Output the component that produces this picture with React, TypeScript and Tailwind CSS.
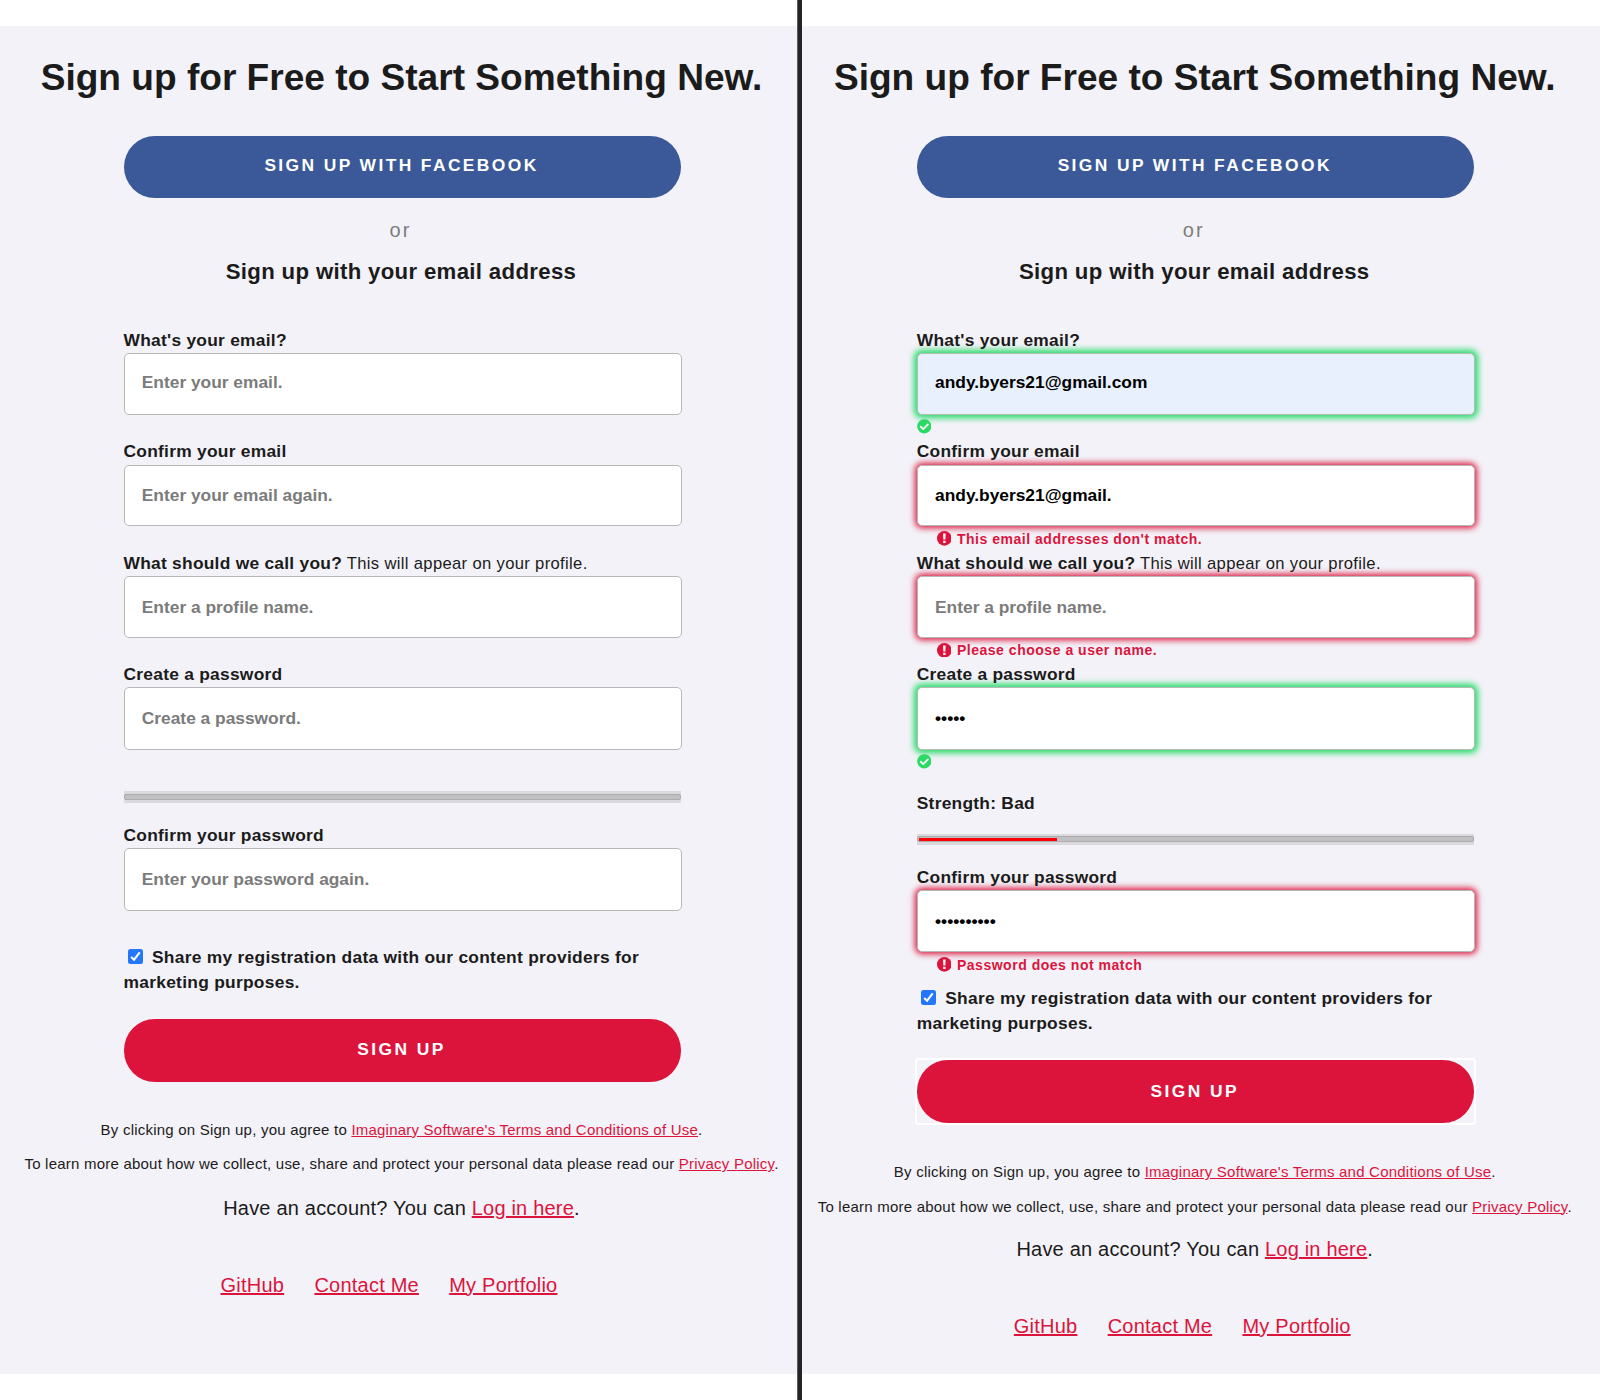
import type { ReactNode } from "react";
import { FaCheckCircle } from "react-icons/fa";

type Status = "idle" | "valid" | "invalid";

const shadows: Record<Status, string> = {
  idle: "",
  valid: "shadow-[0_0_6px_2.5px_#22dc66]",
  invalid: "shadow-[0_0_6px_2px_#dc143c]",
};

function AlertIcon() {
  return (
    <svg viewBox="0 0 16 16" className="size-[14.7px]">
      <circle cx="8" cy="8" r="8" fill="#dc143c" />
      <path d="M6.6 2.6h2.8l-.3 6.6H6.9zM6.7 10.6h2.6v2.5H6.7z" fill="#fff" />
    </svg>
  );
}

function Field({
  label,
  hint,
  placeholder,
  value = "",
  type = "text",
  status = "idle",
  message,
  autofilled = false,
  inputClass = "h-[61.7px] pt-[1px]",
}: {
  label: string;
  hint?: string;
  placeholder: string;
  value?: string;
  type?: string;
  status?: Status;
  message?: string;
  autofilled?: boolean;
  inputClass?: string;
}) {
  return (
    <div className="h-[111.35px]">
      <label className="block h-[25.2px] text-[17.4px] leading-[25px] font-bold tracking-[0.25px] whitespace-nowrap">
        {label}
        {hint && <span className="text-[16.6px] font-normal tracking-[0.34px]"> {hint}</span>}
      </label>
      <input
        type={type}
        placeholder={placeholder}
        defaultValue={value}
        className={`block w-[558px] rounded-[5px] border border-[#b8b8b8] px-[17.3px] text-[17.35px] font-bold text-black outline-none placeholder:text-[#7b7b7b] ${inputClass} ${
          autofilled ? "bg-[#e8f0fe]" : "bg-white"
        } ${shadows[status]}`}
      />
      {status === "valid" && <FaCheckCircle className="mt-[4.5px] size-[14.7px] text-[#2bd965]" />}
      {status === "invalid" && (
        <div className="mt-[5px] ml-[20px] flex h-[15px] items-center gap-[5.5px] text-[14px] leading-[15px] font-bold tracking-[0.52px] text-[#dc143c]">
          <AlertIcon />
          <span className="pt-[1px]">{message}</span>
        </div>
      )}
    </div>
  );
}

function Strength({ label, level = 0 }: { label?: string; level?: number }) {
  return (
    <div>
      {label && (
        <p className="mt-[17.4px] h-[25px] text-[17.4px] leading-[25px] font-bold tracking-[0.25px]">{label}</p>
      )}
      <div className="mt-[18px] mb-[19.9px] flex h-[11.4px] w-[557px] items-center bg-[#dadade]">
        <div className="flex h-[6px] w-full items-center rounded-[2px] border border-[#acacae] bg-[#c0c0c2] pl-[1px]">
          {level > 0 && <div className="h-[3px] bg-[#fb0007]" style={{ width: `${level}%` }} />}
        </div>
      </div>
    </div>
  );
}

function PillButton({ className, children }: { className: string; children: ReactNode }) {
  return (
    <button
      type="button"
      className={`block w-[557px] rounded-[31px] text-center text-[17.4px] leading-[25px] font-bold tracking-[2.4px] text-white ${className}`}
    >
      {children}
    </button>
  );
}

function Link({ children }: { children: ReactNode }) {
  return (
    <a href="#" className="text-[#dc143c] underline">
      {children}
    </a>
  );
}

function Consent() {
  return (
    <label className="block w-[557px] text-[17.4px] leading-[25px] font-bold tracking-[0.27px]">
      <span className="mr-[9.5px] ml-[4px] inline-flex size-[15px] items-center justify-center rounded-[2.5px] bg-[#2476fb] align-[0px]">
        <svg viewBox="0 0 12 12" className="size-[13px]" fill="none" stroke="#fff" strokeWidth="1.9">
          <path d="M2 6.4 4.7 9 9.9 2.2" />
        </svg>
      </span>
      Share my registration data with our content providers for
      <br />
      marketing purposes.
    </label>
  );
}

function SignupPage({ submitted = false }: { submitted?: boolean }) {
  return (
    <div className="flex h-[1348px] flex-col pt-[29px]">
      <h1 className="h-[44px] pr-[1px] text-center text-[37.1px] leading-[44px] font-bold whitespace-nowrap">
        Sign up for Free to Start Something New.
      </h1>
      <div className="flex justify-center">
        <PillButton className="mt-[37px] h-[62px] bg-[#3b5998] pr-[1px] pb-[3px]">SIGN UP WITH FACEBOOK</PillButton>
      </div>
      <p className="mt-[20px] h-[24px] pr-[3px] text-center text-[20px] leading-[24px] tracking-[2px] text-[#7d7d7d]">
        or
      </p>
      <h2 className="mt-[16px] h-[28px] pr-[2px] text-center text-[22.2px] leading-[28px] font-bold tracking-[0.33px]">
        Sign up with your email address
      </h2>

      <form className="mx-auto mt-[42px] w-[557px]">
        <Field
          label="What's your email?"
          placeholder="Enter your email."
          value={submitted ? "andy.byers21@gmail.com" : ""}
          status={submitted ? "valid" : "idle"}
          autofilled={submitted}
          inputClass="h-[61.7px] pb-[3px]"
        />
        <Field
          label="Confirm your email"
          placeholder="Enter your email again."
          value={submitted ? "andy.byers21@gmail." : ""}
          status={submitted ? "invalid" : "idle"}
          message="This email addresses don't match."
        />
        <Field
          label="What should we call you?"
          hint="This will appear on your profile."
          placeholder="Enter a profile name."
          status={submitted ? "invalid" : "idle"}
          message="Please choose a user name."
        />
        <Field
          label="Create a password"
          placeholder="Create a password."
          type="password"
          value={submitted ? "12345" : ""}
          status={submitted ? "valid" : "idle"}
          inputClass="h-[62.7px]"
        />
        {submitted ? <Strength label="Strength: Bad" level={25} /> : <Strength />}
        <Field
          label="Confirm your password"
          placeholder="Enter your password again."
          type="password"
          value={submitted ? "1234567890" : ""}
          status={submitted ? "invalid" : "idle"}
          message="Password does not match"
          inputClass={submitted ? "h-[61.9px] pt-[1px]" : "h-[62.7px]"}
        />
        <div className={submitted ? "mt-[9.2px]" : "mt-[10.8px]"}>
          <Consent />
        </div>
        <PillButton
          className={
            submitted
              ? "mt-[24.5px] h-[62.5px] bg-[#dc143c] pr-[1px]"
              : "mt-[24.5px] h-[62.5px] bg-[#dc143c] pr-[1px] pb-[2px]"
          }
        >
          SIGN UP
        </PillButton>
        {submitted && (
          <div className="pointer-events-none relative">
            <div className="absolute -top-[64.5px] -left-[2px] h-[66.5px] w-[561px] rounded-[4px] border-2 border-white" />
          </div>
        )}
      </form>

      <div className="pr-[1px] text-center whitespace-nowrap">
        <p
          className={
            submitted
              ? "mt-[37.5px] h-[24px] text-[15px] leading-[24px] tracking-[0.22px]"
              : "mt-[36.2px] h-[24px] text-[15px] leading-[24px] tracking-[0.22px]"
          }
        >
          By clicking on Sign up, you agree to <Link>Imaginary Software's Terms and Conditions of Use</Link>.
        </p>
        <p className="mt-[10.5px] h-[24px] text-[15px] leading-[24px] tracking-[0.22px]">
          To learn more about how we collect, use, share and protect your personal data please read our{" "}
          <Link>Privacy Policy</Link>.
        </p>
        <p
          className={
            submitted
              ? "mt-[18.3px] h-[24px] text-[20px] leading-[24px] tracking-[0.2px]"
              : "mt-[19.5px] h-[24px] text-[20px] leading-[24px] tracking-[0.2px]"
          }
        >
          Have an account? You can <Link>Log in here</Link>.
        </p>
      </div>
      <nav className="mt-[53px] mr-[26px] flex h-[24px] justify-center gap-[30.3px] text-[20px] leading-[24px] tracking-[0.22px]">
        <Link>GitHub</Link>
        <Link>Contact Me</Link>
        <Link>My Portfolio</Link>
      </nav>
    </div>
  );
}

export default function App() {
  return (
    <div className="flex h-[1400px] w-[1600px] overflow-hidden bg-white font-['Liberation_Sans',Arial,sans-serif] text-[#1b1b1b]">
      <div className="mt-[26px] h-[1348px] w-[797px] overflow-hidden bg-[#f3f2f8]">
        <div className="w-[804px]">
          <SignupPage />
        </div>
      </div>
      <div className="h-full w-[5px] border-l border-[#5d5d5f] bg-[#242425]" />
      <div className="mt-[26px] h-[1348px] w-[798px] overflow-hidden bg-[#f3f2f8]">
        <div className="w-[786.5px]">
          <SignupPage submitted />
        </div>
      </div>
    </div>
  );
}
